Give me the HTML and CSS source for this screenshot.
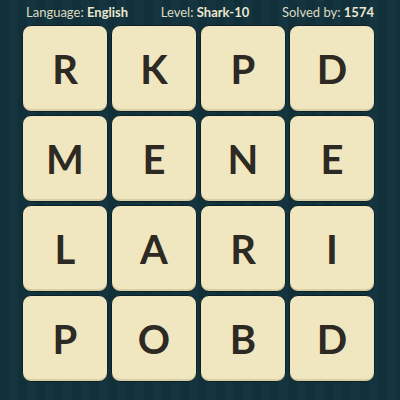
FILE: index.html
```html
<!DOCTYPE html>
<html>
<head>
<meta charset="utf-8">
<link rel="stylesheet" href="styles.css">
</head>
<body>
<div class="page">
  <div class="header">
    <span>Language: <b>English</b></span>
    <span>Level: <b>Shark-10</b></span>
    <span>Solved by: <b>1574</b></span>
  </div>
  <div class="grid">
    <div class="tile">R</div><div class="tile">K</div><div class="tile">P</div><div class="tile">D</div>
    <div class="tile">M</div><div class="tile">E</div><div class="tile">N</div><div class="tile">E</div>
    <div class="tile">L</div><div class="tile">A</div><div class="tile">R</div><div class="tile">I</div>
    <div class="tile">P</div><div class="tile">O</div><div class="tile">B</div><div class="tile">D</div>
  </div>
</div>
</body>
</html>
```

FILE: styles.css
```css
html, body {
  margin: 0;
  padding: 0;
}
body {
  width: 400px;
  height: 400px;
  overflow: hidden;
  background-color: #11303a;
  background-image: repeating-linear-gradient(90deg, #11303a 0px, #11303a 9px, #143540 9px, #143540 18px);
}
.page {
  display: flex;
  flex-direction: column;
  align-items: stretch;
}
.header {
  height: 24px;
  display: flex;
  justify-content: space-between;
  align-items: center;
  padding: 0 26px 0 26px;
  font-family: "Lato", "DejaVu Sans", sans-serif;
  font-size: 13px;
  color: #dedac0;
}
.header b {
  font-weight: 700;
  color: #ebe7cf;
}
.grid {
  display: grid;
  grid-template-columns: repeat(4, 86px);
  grid-auto-rows: 87px;
  gap: 3px;
  margin: 1px 0 0 22px;
}
.tile {
  background: #f0e7c0;
  border: 1px solid #0c2126;
  border-radius: 9px;
  box-shadow: inset 0 -2px 0 #d8cfa6;
  display: flex;
  align-items: center;
  justify-content: center;
  font-family: "Lato", "DejaVu Sans", sans-serif;
  font-weight: 700;
  font-size: 40px;
  color: #2d2923;
}
```
